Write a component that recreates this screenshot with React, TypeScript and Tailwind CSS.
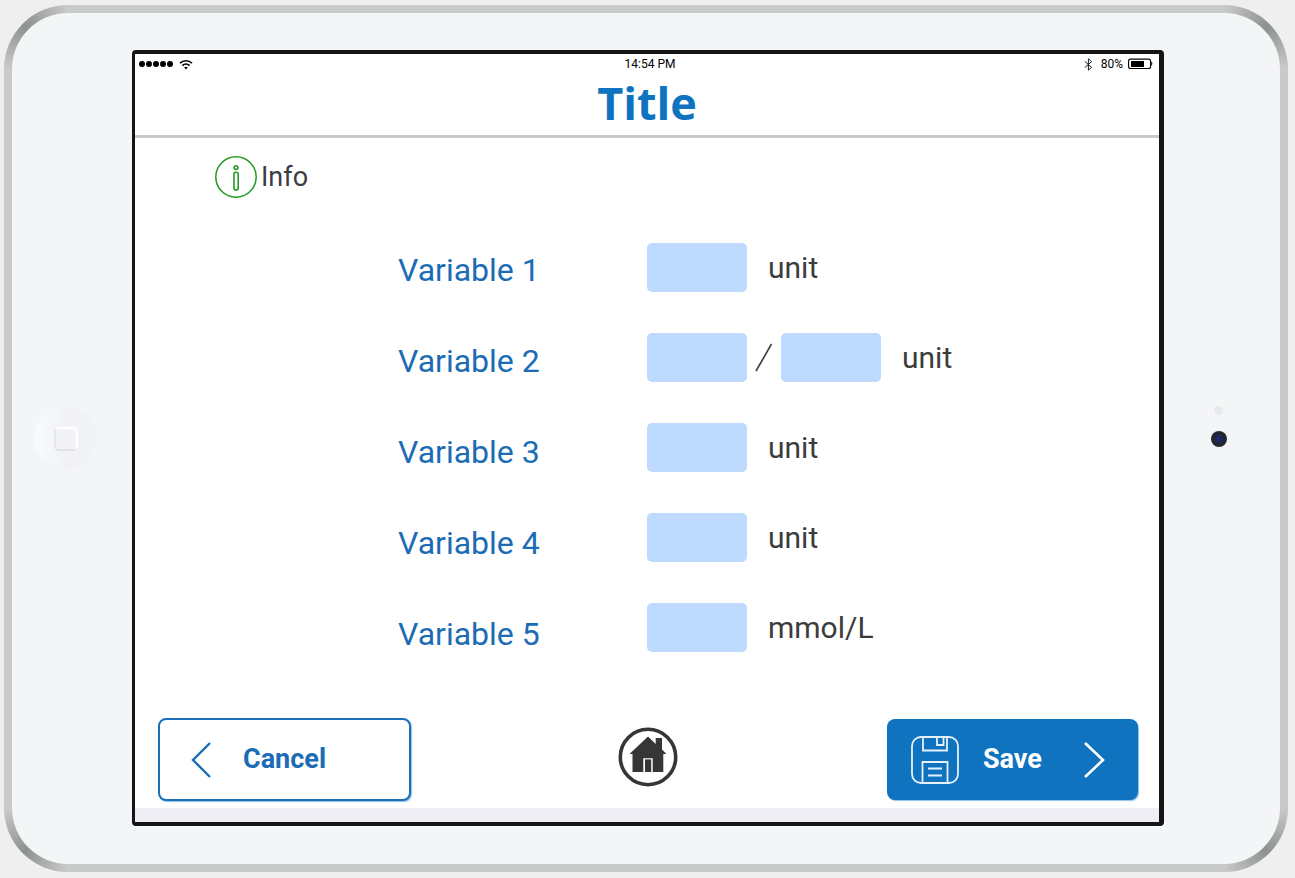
import { useState } from 'react';

interface Field {
  id: string;
  label: string;
  unit: string;
  parts: number;
}

const FIELDS: Field[] = [
  { id: 'variable1', label: 'Variable 1', unit: 'unit', parts: 1 },
  { id: 'variable2', label: 'Variable 2', unit: 'unit', parts: 2 },
  { id: 'variable3', label: 'Variable 3', unit: 'unit', parts: 1 },
  { id: 'variable4', label: 'Variable 4', unit: 'unit', parts: 1 },
  { id: 'variable5', label: 'Variable 5', unit: 'mmol/L', parts: 1 },
];

const inputClass =
  'w-[100px] h-[49px] shrink-0 px-2 text-center text-2xl text-[#3c3c3b] bg-[#bedafe] rounded-[5px] outline-none focus:ring-2 focus:ring-[#1073c0]';

function StatusBar() {
  return (
    <div className="grid grid-cols-3 items-center h-5 pl-1 pr-[6px] text-xs text-black">
      <div className="flex items-center gap-[5px]">
        <svg width="35" height="8" viewBox="0 0 35 8" aria-hidden="true">
          {[3, 10, 17, 24, 31].map((cx) => (
            <circle key={cx} cx={cx} cy="4" r="3" />
          ))}
        </svg>
        <svg width="14" height="11" viewBox="0 0 14 11" fill="none" stroke="#000" aria-hidden="true">
          <path d="M1 4.2a8.6 8.6 0 0 1 12 0" strokeWidth="1.7" />
          <path d="M3.4 6.6a5.2 5.2 0 0 1 7.2 0" strokeWidth="1.7" />
          <path d="M7 10.4 5.2 8.6a2.6 2.6 0 0 1 3.6 0Z" fill="#000" stroke="none" />
        </svg>
      </div>
      <span className="pl-2 text-center">14:54 PM</span>
      <div className="flex items-center justify-end">
        <svg className="mr-2" width="9" height="13" viewBox="0 0 9 13" fill="none" stroke="#1c1c28" aria-hidden="true">
          <path d="M.8 3.4 7.6 9.4 4.4 12.2V.8l3.2 2.8L.8 9.6" />
        </svg>
        <span className="mr-[5px]">80%</span>
        <svg width="25" height="12" viewBox="0 0 25 12" aria-hidden="true">
          <rect x=".6" y="1.1" width="22" height="9.4" rx="2" fill="none" stroke="#000" strokeWidth="1.1" />
          <rect x="3" y="3" width="13" height="6" />
          <path d="M23.2 3.6q2.4 2.2 0 4.4Z" />
        </svg>
      </div>
    </div>
  );
}

function HomeIcon() {
  return (
    <svg width="60" height="60" viewBox="0 0 60 60" aria-hidden="true">
      <circle cx="30" cy="30" r="27.7" fill="#fff" stroke="#363636" strokeWidth="3.6" />
      <path
        d="M30 9.5 11.5 27h3v18h10.8V31.2h9.4V45h10.6V27h3.2L44 22.6V11h-6.3v6Z"
        fill="#363636"
      />
      <rect x="27" y="32.4" width="6.2" height="12.6" fill="#363636" />
    </svg>
  );
}

function SaveIcon() {
  return (
    <svg width="48" height="48" viewBox="0 0 48 48" fill="none" stroke="#e6f1fc" strokeWidth="1.8" aria-hidden="true">
      <rect x="1" y="1" width="46" height="46" rx="9" />
      <path d="M12 1v13.5h24V1M26 1v8h6.5V1" />
      <path d="M11.5 47V26h25v21M17 32.5h14M17 39.5h14" />
    </svg>
  );
}

export default function App() {
  const [values, setValues] = useState<Record<string, string>>({});

  const handleChange = (key: string) => (e: React.ChangeEvent<HTMLInputElement>) => {
    setValues({ ...values, [key]: e.target.value });
  };

  return (
    <div className="min-h-screen flex bg-[#efefef] pt-[5px] pr-[7px] pb-[6px] pl-1 font-[Roboto,sans-serif]">
      {/* metal rim, darker on the four corners */}
      <div className="flex-1 flex p-2 rounded-[64px] [background:conic-gradient(from_270deg_at_100%_100%,#c9cbca,#8e9191_45deg,#c9cbca_90deg)_top_left/64px_64px_no-repeat,conic-gradient(from_0deg_at_0%_100%,#c9cbca,#8e9191_45deg,#c9cbca_90deg)_top_right/64px_64px_no-repeat,conic-gradient(from_180deg_at_100%_0%,#c9cbca,#8e9191_45deg,#c9cbca_90deg)_bottom_left/64px_64px_no-repeat,conic-gradient(from_90deg_at_0%_0%,#c9cbca,#8e9191_45deg,#c9cbca_90deg)_bottom_right/64px_64px_no-repeat,#c9cbca]">
        <div className="flex-1 flex items-stretch bg-[#f4f5f7] rounded-[56px]">
          <div className="w-[120px] shrink-0 flex items-center pl-[22px]">
            <div className="size-[63px] rounded-full flex items-center justify-center bg-linear-to-r from-[#fafbfc] via-[#f1f2f5] to-[#f2f3f5]">
              <div className="size-6 rounded-[5px] border-2 border-t-white border-r-white border-b-[#e2e3e6] border-l-[#e6e7ea] bg-[#f2f3f5]" />
            </div>
          </div>

          <main className="flex-1 flex flex-col mt-[37px] mb-[38px] bg-white border-[#141517] border-t-4 border-r-[5px] border-b-4 border-l-[3px] rounded-[4px]">
            <StatusBar />
            <header className="h-16 pb-1 border-b-3 border-[#c9c9c9] flex items-center justify-center">
              <h1 className="text-[45px] leading-none font-bold text-[#1073c0] font-['Open_Sans',sans-serif]">Title</h1>
            </header>

            <div className="flex items-center gap-1 pt-[18px] pl-20">
              <svg width="42" height="42" viewBox="0 0 42 42" fill="none" stroke="#259b24" strokeWidth="1.6" aria-hidden="true">
                <circle cx="21" cy="21" r="20.2" />
                <circle cx="21" cy="11.6" r="1.9" />
                <rect x="19" y="16.3" width="4.2" height="17.6" rx="2" />
              </svg>
              <span className="text-[27px] leading-8 text-[#3c3c46]">Info</span>
            </div>

            <form id="variables" className="flex-1 grid grid-cols-2 pt-[45px]">
              <div className="w-[249px] justify-self-end flex flex-col gap-[42px] text-[#1b6cb5]">
                {FIELDS.map((field) => (
                  <label key={field.id} htmlFor={field.id} className="h-[49px] pt-[7px] text-[32px] leading-10">
                    {field.label}
                  </label>
                ))}
              </div>
              <div className="flex flex-col gap-[41px] text-[30px] leading-10 text-[#3c3c3b]">
                {FIELDS.map((field) => (
                  <div key={field.id} className="h-[49px] flex items-center">
                    <input
                      id={field.id}
                      type="text"
                      value={values[field.id] || ''}
                      onChange={handleChange(field.id)}
                      className={inputClass}
                    />
                    {field.parts === 2 && (
                      <>
                        <svg className="mx-2" width="18" height="30" viewBox="0 0 18 30" aria-hidden="true">
                          <path d="M1 28 16.5 1" stroke="#3c3c3b" strokeWidth="1.6" />
                        </svg>
                        <input
                          type="text"
                          aria-label={`${field.label}, second value`}
                          value={values[field.id + 'b'] || ''}
                          onChange={handleChange(field.id + 'b')}
                          className={inputClass}
                        />
                      </>
                    )}
                    <span className="ml-[21px]">{field.unit}</span>
                  </div>
                ))}
              </div>
            </form>

            <footer className="grid grid-cols-3 items-center pl-[23px] pr-[21px] pb-[7px]">
              <button
                type="button"
                className="w-[253px] h-[83px] pl-[31px] flex items-center gap-8 bg-white border-2 border-[#1b6fb8] rounded-lg shadow-[1px_1px_1px_#8ec0ea] text-[27px] font-bold text-[#1b6cb5]"
              >
                <svg width="20" height="36" viewBox="0 0 20 36" fill="none" stroke="#1b6cb5" strokeWidth="2.4" aria-hidden="true">
                  <path d="M19 1 2 18l17 17" />
                </svg>
                Cancel
              </button>
              <button type="button" aria-label="Home" className="justify-self-center pb-[5px]">
                <HomeIcon />
              </button>
              <button
                type="submit"
                form="variables"
                className="w-[251px] h-[81px] pl-6 justify-self-end flex items-center bg-[#1073c0] rounded-lg shadow-[1px_1px_1px_#8ec0ea] text-[27px] font-bold text-white"
              >
                <SaveIcon />
                <span className="ml-6 mr-[42px]">Save</span>
                <svg width="21" height="36" viewBox="0 0 21 36" fill="none" stroke="#fff" strokeWidth="2.6" aria-hidden="true">
                  <path d="M1 1l18 17L1 35" />
                </svg>
              </button>
            </footer>
            <div className="h-[14px] bg-[#efeef4]" />
          </main>

          <div className="w-[116px] shrink-0 flex flex-col items-center justify-center gap-4 pr-[7px] pb-[25px]">
            <div className="size-[9px] rounded-full bg-[#e9eaeb]" />
            <div className="size-4 rounded-full bg-radial from-[#23238a] via-[#22242c] to-[#303236]" />
          </div>
        </div>
      </div>
    </div>
  );
}
